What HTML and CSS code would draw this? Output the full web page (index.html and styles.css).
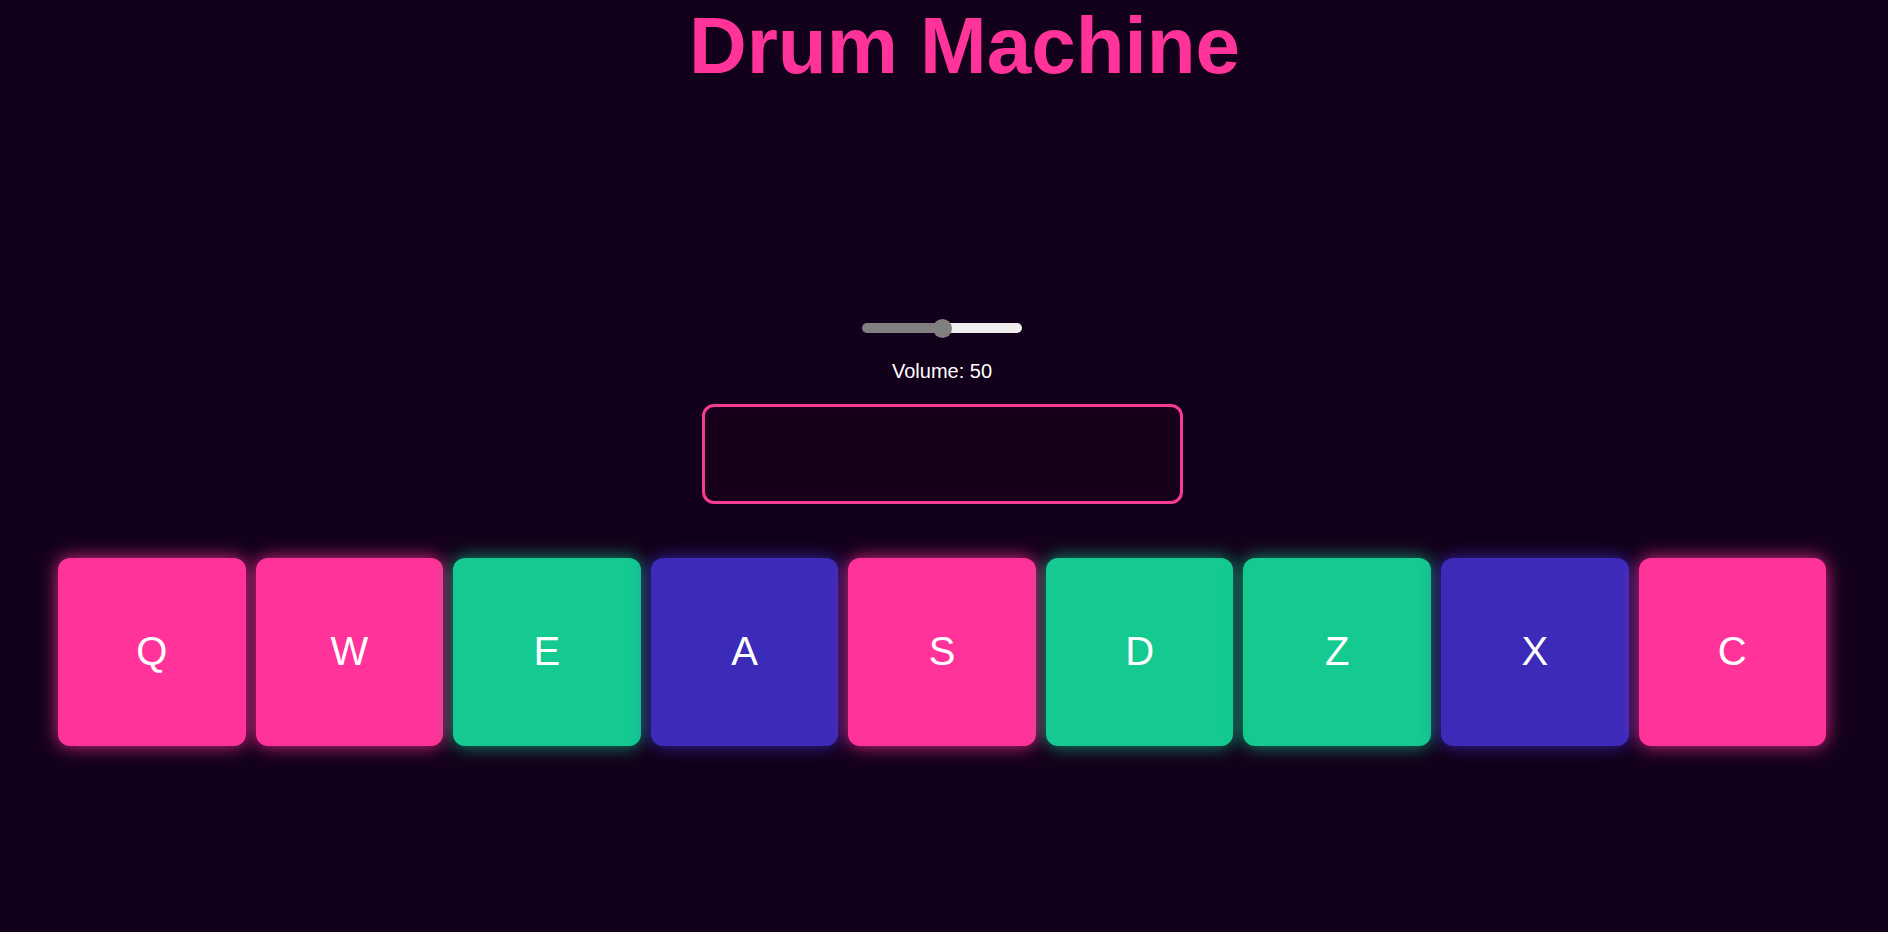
FILE: index.html
```html
<!DOCTYPE html>
<html lang="en">
<head>
<meta charset="utf-8">
<title>Drum Machine</title>
<link rel="stylesheet" href="styles.css">
</head>
<body>
  <main class="machine">
    <h1 class="title">Drum Machine</h1>
    <section class="controls">
      <input class="volume" type="range" min="0" max="100" value="50" aria-label="Volume">
      <p class="volume-label">Volume: 50</p>
      <div class="display"></div>
    </section>
    <section class="pads">
      <button class="pad pad-pink">Q</button>
      <button class="pad pad-pink">W</button>
      <button class="pad pad-green">E</button>
      <button class="pad pad-blue">A</button>
      <button class="pad pad-pink">S</button>
      <button class="pad pad-green">D</button>
      <button class="pad pad-green">Z</button>
      <button class="pad pad-blue">X</button>
      <button class="pad pad-pink">C</button>
    </section>
  </main>
</body>
</html>
```

FILE: styles.css
```css
html, body {
  margin: 0;
  padding: 0;
  background: #13001a;
  height: 100%;
}

body {
  font-family: "Liberation Sans", Arial, sans-serif;
  color: #ffffff;
}

.machine {
  display: flex;
  flex-direction: column;
  align-items: stretch;
}

.title {
  margin: 0;
  padding-left: 41px;
  font-size: 80px;
  line-height: 92px;
  font-weight: 700;
  color: #ff3399;
  text-align: center;
}

.controls {
  display: flex;
  flex-direction: column;
  align-items: center;
  padding-right: 4px;
  margin-top: 231px;
}

.volume {
  -webkit-appearance: none;
  appearance: none;
  width: 160px;
  height: 10px;
  margin: 0;
  padding: 0;
  background: transparent;
}

.volume::-webkit-slider-runnable-track {
  height: 10px;
  border-radius: 5px;
  background: linear-gradient(to right, #808080 50%, #efefef 50%);
}

.volume::-webkit-slider-thumb {
  -webkit-appearance: none;
  appearance: none;
  width: 19px;
  height: 19px;
  margin-top: -4.5px;
  border-radius: 50%;
  background: #808080;
  border: none;
}

.volume-label {
  margin: 27px 0 0;
  font-size: 20px;
  line-height: 23px;
  color: #ffffff;
}

.display {
  box-sizing: border-box;
  width: 481px;
  height: 100px;
  margin-top: 21px;
  border: 3px solid #f73a96;
  border-radius: 12px;
  background: #160019;
  box-shadow: inset 0 0 16px rgba(255, 51, 153, 0.04);
}

.pads {
  display: flex;
  gap: 10px;
  padding: 0 62px 0 58px;
  margin-top: 54px;
}

.pad {
  flex: 1 1 0;
  aspect-ratio: 1 / 1;
  min-width: 0;
  border: none;
  border-radius: 12px;
  font-family: "Liberation Sans", Arial, sans-serif;
  font-size: 40px;
  color: #ffffff;
  padding: 0;
  cursor: pointer;
}

.pad-pink {
  background: #ff3399;
  box-shadow: 0 0 18px rgba(255, 51, 153, 0.85);
}

.pad-green {
  background: #14ca91;
  box-shadow: 0 0 18px rgba(20, 202, 145, 0.75);
}

.pad-blue {
  background: #3c2ab9;
  box-shadow: 0 0 18px rgba(60, 42, 185, 0.85);
}
```
